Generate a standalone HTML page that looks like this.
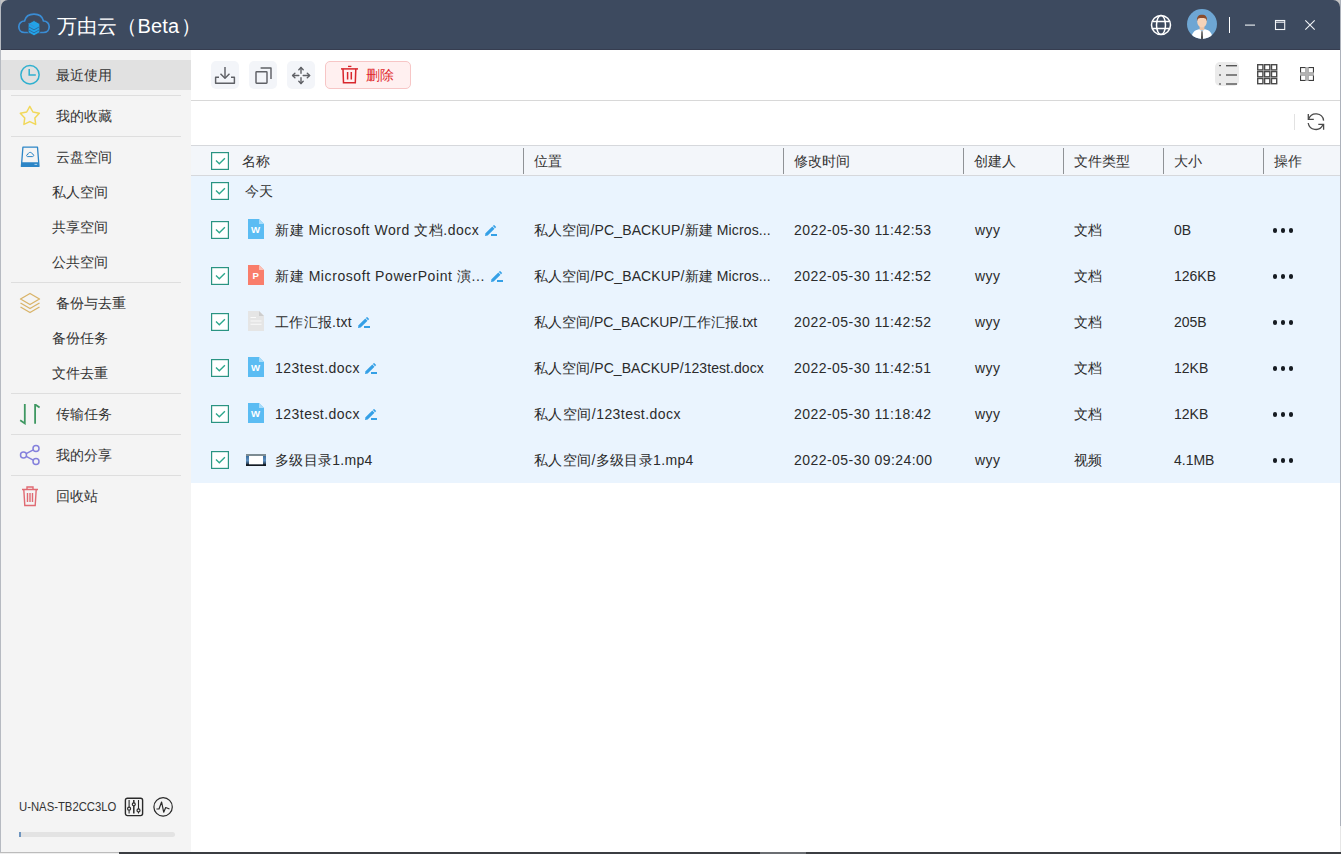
<!DOCTYPE html>
<html><head><meta charset="utf-8">
<style>
*{margin:0;padding:0;box-sizing:border-box}
html,body{width:1341px;height:854px;overflow:hidden;background:#c4c4c4;font-family:"Liberation Sans",sans-serif;color:#333}
.abs{position:absolute}
#win{position:absolute;left:0;top:0;width:1341px;height:854px;overflow:hidden}
#content{position:absolute;left:1px;top:50px;width:1339px;height:802px;background:#fff}
#hdr{position:absolute;left:1px;top:0;width:1339px;height:50px;background:#3d4a5f;border-radius:7px 7px 0 0;border-bottom:1px solid #363d50}
#hdr>*{margin-left:-1px}
#side{position:absolute;left:0;top:50px;width:191px;height:802px;background:#f4f4f4}
.t{position:absolute;white-space:nowrap;line-height:20px}
.sep{position:absolute;left:11px;width:170px;height:1px;background:#dedede}
.mi{font-size:13.6px;color:#333;margin-top:1px}
.tb{position:absolute;top:61px;width:28px;height:28px;border-radius:5px;background:#f3f5f9}
.col{position:absolute;top:148px;width:1px;height:26px;background:#8f9296}
.hd{position:absolute;top:153px;font-size:13px;color:#333;line-height:16px}
.cb{position:absolute;left:210px;width:19px;height:19px;border:1.6px solid #2ba38f;background:#fff}
.cb:after{content:"";position:absolute;left:4.5px;top:3px;width:7px;height:4px;border-left:1.5px solid #2ba38f;border-bottom:1.5px solid #2ba38f;transform:rotate(-45deg)}
.row{position:absolute;left:0;width:1150px;height:46px}
.c{position:absolute;font-size:14px;line-height:20px;white-space:nowrap;color:#2b2b2b}
.d{letter-spacing:0.45px}
.dots{position:absolute;left:1273px;width:20px;height:4px}
.dots i{position:absolute;top:0.4px;width:4.3px;height:4.3px;border-radius:50%;background:#161b22}
</style></head><body>
<div id="win">
  <div id="content"></div>
  <div id="hdr">
    <svg class="abs" style="left:14px;top:10px" width="40" height="30" viewBox="0 0 40 30">
      <path d="M10.5 22.5C7 22.5 4.8 20 4.8 16.8C4.8 13.5 7.3 11 10.5 11C11.5 7 15 4.2 20 4.2C25 4.2 28.5 7 29.5 11C32.7 11 35.2 13.5 35.2 16.8C35.2 20 33 22.5 29.5 22.5Z" fill="none" stroke="#3a8cd4" stroke-width="1.7"/>
      <path d="M14.2 13.8L20 10.5L25.8 13.8V22.5L20 25.8L14.2 22.5Z" fill="#22a3e8" stroke="#3d4a5f" stroke-width="0.8"/>
      <path d="M14.2 16.6L20 19.8L25.8 16.6M14.2 19.6L20 22.8L25.8 19.6" fill="none" stroke="#2a6fa8" stroke-width="1"/>
      <path d="M14.6 13.6L20.5 16.8" fill="none" stroke="#3a8cd4" stroke-width="1"/>
    </svg>
    <div class="t" style="left:56.5px;top:15px;font-size:20px;line-height:22px;color:#fff">万由云（<span style="margin-left:1px;letter-spacing:0.2px">Beta</span><span style="margin-left:2px">）</span></div>
    <!-- globe -->
    <svg class="abs" style="left:1150px;top:14px" width="22" height="22" viewBox="0 0 22 22" fill="none" stroke="#fff" stroke-width="1.5">
      <circle cx="11" cy="11" r="9.5"/><ellipse cx="11" cy="11" rx="4.5" ry="9.5"/><path d="M2.5 7.5H19.5M2.5 14.5H19.5"/>
    </svg>
    <!-- avatar -->
    <svg class="abs" style="left:1187px;top:9px" width="30" height="30" viewBox="0 0 30 30">
      <defs><clipPath id="av"><circle cx="15" cy="15" r="15"/></clipPath></defs>
      <circle cx="15" cy="15" r="15" fill="#6ea6d3"/>
      <g clip-path="url(#av)">
        <rect x="12.6" y="15" width="4.8" height="6" fill="#efc3a4"/>
        <path d="M4.5 30C4.5 24 7.5 21 12 20.2L15 22L18 20.2C22.5 21 25.5 24 25.5 30Z" fill="#fff"/>
        <path d="M12.2 20.3L15 22.6L17.8 20.3" fill="none" stroke="#e8e8e8" stroke-width="0.6"/>
        <ellipse cx="15" cy="12.6" rx="4.8" ry="5.8" fill="#f7d3b8"/>
        <path d="M10 12.5C9.6 7.6 11.6 5.8 15 5.8C18.4 5.8 20.4 7.6 20 12.5C19.5 10 18.8 9.4 17.5 9.2C16 9 13.5 9.2 12.4 9.2C11 9.4 10.4 10.2 10 12.5Z" fill="#8a4b2b"/>
        <path d="M14.5 22.2H15.5L15.8 30H14.2Z" fill="#161616"/>
      </g>
    </svg>
    <div class="abs" style="left:1229px;top:17px;width:1px;height:16px;background:#fff"></div>
    <svg class="abs" style="left:1244px;top:19px" width="72" height="12" viewBox="0 0 72 12" fill="none" stroke="#f2f4f7" stroke-width="1.1"><path d="M1 6.1H11"/><rect x="31.5" y="1.5" width="9.2" height="9"/><path d="M31.5 3.2H40.7"/><path d="M61.3 1.3L70.7 10.7M70.7 1.3L61.3 10.7"/></svg>
  </div>

  <div id="side">
    <div class="abs" style="left:0;top:10px;width:191px;height:30px;background:#e1e1e1"></div>
  </div>
  <div class="sep" style="top:95px"></div>
  <div class="sep" style="top:136px"></div>
  <div class="sep" style="top:282px"></div>
  <div class="sep" style="top:393px"></div>
  <div class="sep" style="top:434px"></div>
  <div class="sep" style="top:475px"></div>
  <div class="t mi" style="left:56px;top:65px">最近使用</div>
  <div class="t mi" style="left:56px;top:106px">我的收藏</div>
  <div class="t mi" style="left:56px;top:147px">云盘空间</div>
  <div class="t mi" style="left:52px;top:182px">私人空间</div>
  <div class="t mi" style="left:52px;top:217px">共享空间</div>
  <div class="t mi" style="left:52px;top:252px">公共空间</div>
  <div class="t mi" style="left:56px;top:293px">备份与去重</div>
  <div class="t mi" style="left:52px;top:328px">备份任务</div>
  <div class="t mi" style="left:52px;top:363px">文件去重</div>
  <div class="t mi" style="left:56px;top:404px">传输任务</div>
  <div class="t mi" style="left:56px;top:445px">我的分享</div>
  <div class="t mi" style="left:56px;top:486px">回收站</div>
  <!-- icons -->
  <svg class="abs" style="left:19px;top:64px" width="22" height="22" viewBox="0 0 22 22" fill="none" stroke="#2fb0cf" stroke-width="1.5"><circle cx="11" cy="10.75" r="9.15"/><path d="M10.2 5V11.1H16.8"/></svg>
  <svg class="abs" style="left:19px;top:105px" width="22" height="22" viewBox="0 0 22 22" fill="none" stroke="#f1d85a" stroke-width="1.5" stroke-linejoin="round"><path d="M10.80 1.30 L13.92 7.01 L20.31 8.21 L15.84 12.94 L16.68 19.39 L10.80 16.60 L4.92 19.39 L5.76 12.94 L1.29 8.21 L7.68 7.01Z"/></svg>
  <svg class="abs" style="left:20px;top:146px" width="20" height="22" viewBox="0 0 20 22"><path d="M2.9 1.2H17.5L19 20.4H1.4Z" fill="none" stroke="#2c85c6" stroke-width="1.3" stroke-linejoin="round"/><path d="M1.7 16.2H18.7L19 20.6H1.4Z" fill="#2c85c6"/><path d="M14.5 18.4H17.2" stroke="#cfe6f6" stroke-width="0.8"/><path d="M7.5 10.6H12.3C13.3 10.6 13.7 10 13.7 9.3C13.7 8.6 13.1 8.1 12.4 8.1C12.1 7 11.3 6.4 10.2 6.4C9 6.4 8.1 7.2 8 8.3C7.3 8.3 6.6 8.8 6.6 9.5C6.6 10.1 7 10.6 7.5 10.6Z" fill="none" stroke="#2c85c6" stroke-width="1"/></svg>
  <svg class="abs" style="left:19px;top:292px" width="22" height="22" viewBox="0 0 22 22" fill="none" stroke="#d9b46a" stroke-width="1.4" stroke-linejoin="round"><path d="M11 1.5L20.5 7L11 12.5L1.5 7Z"/><path d="M1.5 11L11 16.5L20.5 11"/><path d="M1.5 15L11 20.5L20.5 15"/></svg>
  <svg class="abs" style="left:19px;top:404px" width="22" height="21" viewBox="0 0 22 21" fill="none" stroke="#3f9862" stroke-width="1.8"><path d="M5.8 0V19.4L1.2 16.3"/><path d="M16.1 19.8V0.4L20.6 3.5"/></svg>
  <svg class="abs" style="left:19px;top:444px" width="22" height="22" viewBox="0 0 22 22" fill="none" stroke="#8480dc" stroke-width="1.5"><circle cx="17" cy="4.5" r="3"/><circle cx="4.5" cy="11" r="3"/><circle cx="17" cy="17.5" r="3"/><path d="M7.2 9.6L14.3 5.9M7.2 12.4L14.3 16.1"/></svg>
  <svg class="abs" style="left:21px;top:485px" width="18" height="22" viewBox="0 0 18 22" fill="none" stroke="#e06a72" stroke-width="1.4"><path d="M1 4.5H17M6 4.5V2H12V4.5"/><path d="M2.8 4.5L3.8 20.5H14.2L15.2 4.5"/><path d="M6.5 8V17M9 8V17M11.5 8V17"/></svg>

  <!-- toolbar -->
  <div class="tb" style="left:211px"></div>
  <div class="tb" style="left:249px"></div>
  <div class="tb" style="left:287px"></div>
  <svg class="abs" style="left:211px;top:61px" width="28" height="28" viewBox="0 0 28 28" fill="none" stroke="#5f6166" stroke-width="1.45" stroke-linejoin="round"><path d="M14 6V17"/><path d="M9.5 12.8L14 17.2L18.5 12.8"/><path d="M8 16.3H4.6V22.2H23.4V16.3H20"/></svg>
  <svg class="abs" style="left:249px;top:61px" width="28" height="28" viewBox="0 0 28 28" fill="none" stroke="#5f6166" stroke-width="1.45" stroke-linejoin="round"><rect x="7" y="10.8" width="11" height="11.4" rx="0.6"/><path d="M11.6 6.9H22V17.9"/></svg>
  <svg class="abs" style="left:287px;top:61px" width="28" height="28" viewBox="0 0 28 28" fill="none" stroke="#5f6166" stroke-width="1.4" stroke-linejoin="round" stroke-linecap="round"><path d="M14 6.4V12.3M14 16.7V22.6M5.6 14.5H11.8M16.2 14.5H22.6"/><path d="M11.8 8.7L14 6.4L16.2 8.7M11.8 20.3L14 22.6L16.2 20.3M7.9 12.3L5.6 14.5L7.9 16.7M20.3 12.3L22.6 14.5L20.3 16.7"/></svg>
  <div class="abs" style="left:325px;top:61px;width:86px;height:28px;border:1px solid #f7c6c6;background:#fff0f0;border-radius:5px"></div>
  <svg class="abs" style="left:340px;top:65px" width="19" height="20" viewBox="0 0 19 20" fill="none" stroke="#d8262c" stroke-width="1.5"><path d="M1 3.9H18"/><path d="M8 1.4H11.4" stroke-width="1.3"/><path d="M3 3.9L3.5 17.8H15.3L15.8 3.9"/><path d="M7.6 7V14.6M11.3 7V14.6"/></svg>
  <div class="t" style="left:366px;top:65px;font-size:14px;color:#e02a2e">删除</div>
  <!-- view icons -->
  <div class="abs" style="left:1215px;top:62px;width:24px;height:24px;border-radius:5px;background:#ebebeb"></div>
  <svg class="abs" style="left:1215px;top:62px" width="24" height="24" viewBox="0 0 24 24" fill="#555"><rect x="4" y="3" width="2" height="1.2"/><rect x="4" y="12.4" width="2" height="1.2"/><rect x="4" y="21.4" width="2" height="1.2"/><rect x="11" y="3" width="11" height="1.4"/><rect x="11" y="12.3" width="11" height="1.4"/><rect x="11" y="21.3" width="11" height="1.4"/></svg>
  <svg class="abs" style="left:1257px;top:64px" width="21" height="21" viewBox="0 0 21 21" fill="none" stroke="#4a4a4a" stroke-width="1.4"><rect x="0.7" y="0.7" width="5.2" height="5.2"/><rect x="7.6" y="0.7" width="5.2" height="5.2"/><rect x="14.5" y="0.7" width="5.2" height="5.2"/><rect x="0.7" y="7.6" width="5.2" height="5.2"/><rect x="7.6" y="7.6" width="5.2" height="5.2"/><rect x="14.5" y="7.6" width="5.2" height="5.2"/><rect x="0.7" y="14.5" width="5.2" height="5.2"/><rect x="7.6" y="14.5" width="5.2" height="5.2"/><rect x="14.5" y="14.5" width="5.2" height="5.2"/></svg>
  <svg class="abs" style="left:1300px;top:67px" width="14" height="14" viewBox="0 0 14 14"><g fill="none" stroke="#3c3c3c" stroke-width="1.1"><rect x="0.55" y="0.55" width="5.6" height="5.6"/><rect x="7.85" y="0.55" width="5.6" height="5.6"/><rect x="0.55" y="7.85" width="5.6" height="5.6"/><rect x="7.85" y="7.85" width="5.6" height="5.6"/></g><rect x="5.4" y="0" width="3.2" height="14" fill="#b3b3b3"/><rect x="0" y="5.4" width="14" height="3.2" fill="#b3b3b3"/></svg>
  <div class="abs" style="left:191px;top:100px;width:1149px;height:1px;background:#d8d8d8"></div>
  <div class="abs" style="left:1294px;top:114px;width:1px;height:16px;background:#e2e2e2"></div>
  <svg class="abs" style="left:1307px;top:113px" width="18" height="18" viewBox="0 0 18 18" fill="none" stroke="#4a4a4a" stroke-width="1.3"><path d="M1.3 0.9V6.4H6.8"/><path d="M1.7 6.1A7.7 7.7 0 0 1 16.6 7.6"/><path d="M1.2 10A7.7 7.7 0 0 0 15.8 12"/><path d="M11.3 11.3H16.6V16.7"/></svg>
  <!-- table header -->
  <div class="abs" style="left:191px;top:145px;width:1149px;height:31px;background:#f3f6fa;border-top:1px solid #d6d8dc;border-bottom:1px solid #d6d8dc"></div>
  <div class="col" style="left:523px"></div>
  <div class="col" style="left:783px"></div>
  <div class="col" style="left:963px"></div>
  <div class="col" style="left:1063px"></div>
  <div class="col" style="left:1163px"></div>
  <div class="col" style="left:1263px"></div>
  <svg class="abs" style="left:211px;top:152px" width="18" height="18" viewBox="0 0 18 18"><rect x="0.6" y="0.6" width="16.8" height="16.8" fill="#fff" stroke="#2a9482" stroke-width="1.2"/><path d="M5 8.6L8.3 11.7L13.9 6.3" fill="none" stroke="#2da88d" stroke-width="1.4"/></svg>
  <div class="t mi" style="left:242px;top:151px">名称</div>
  <div class="t mi" style="left:534px;top:151px">位置</div>
  <div class="t mi" style="left:794px;top:151px">修改时间</div>
  <div class="t mi" style="left:974px;top:151px">创建人</div>
  <div class="t mi" style="left:1074px;top:151px">文件类型</div>
  <div class="t mi" style="left:1174px;top:151px">大小</div>
  <div class="t mi" style="left:1274px;top:151px">操作</div>
  <!-- body -->
  <div class="abs" style="left:191px;top:176px;width:1149px;height:307px;background:#eaf4fe"></div>
  <svg class="abs" style="left:211px;top:182px" width="18" height="18" viewBox="0 0 18 18"><rect x="0.6" y="0.6" width="16.8" height="16.8" fill="#fff" stroke="#2a9482" stroke-width="1.2"/><path d="M5 8.6L8.3 11.7L13.9 6.3" fill="none" stroke="#2da88d" stroke-width="1.4"/></svg>
  <div class="t mi" style="left:245px;top:181px">今天</div>
  <svg class="abs" style="left:211px;top:221px" width="18" height="18" viewBox="0 0 18 18"><rect x="0.6" y="0.6" width="16.8" height="16.8" fill="#fff" stroke="#2a9482" stroke-width="1.2"/><path d="M5 8.6L8.3 11.7L13.9 6.3" fill="none" stroke="#2da88d" stroke-width="1.4"/></svg>
  <svg class="abs" style="left:248px;top:219px" width="16" height="20" viewBox="0 0 16 20"><path d="M0 0H11L16 5V20H0Z" fill="#5bbcf3"/><path d="M11 0V5H16Z" fill="#a8dcfa"/><text x="7.6" y="14.2" font-family="Liberation Sans" font-size="9.6" font-weight="bold" fill="#fff" text-anchor="middle">W</text></svg>
  <div class="t c" style="left:275px;top:220px;letter-spacing:0.53px">新建 Microsoft Word 文档.docx</div>
  <svg class="abs" style="left:485px;top:225px" width="13" height="12" viewBox="0 0 13 12"><path d="M0 11L0.5 8.3L7.3 1.6L9.5 3.8L2.7 10.5Z" fill="#35a0e6"/><path d="M7.9 1L9 -0.1L11.2 2.1L10.1 3.2Z" fill="#35a0e6"/><rect x="6" y="9" width="6" height="2" fill="#35a0e6"/></svg>
  <div class="t c" style="left:534px;top:220px;letter-spacing:0.13px">私人空间/PC_BACKUP/新建 Micros...</div>
  <div class="t c d" style="left:794px;top:220px">2022-05-30 11:42:53</div>
  <div class="t c" style="left:975px;top:220px;letter-spacing:0.5px">wyy</div>
  <div class="t c" style="left:1074px;top:220px">文档</div>
  <div class="t c" style="left:1174px;top:220px">0B</div>
  <div class="dots" style="top:228px"><i style="left:0"></i><i style="left:8px"></i><i style="left:16px"></i></div>
  <svg class="abs" style="left:211px;top:267px" width="18" height="18" viewBox="0 0 18 18"><rect x="0.6" y="0.6" width="16.8" height="16.8" fill="#fff" stroke="#2a9482" stroke-width="1.2"/><path d="M5 8.6L8.3 11.7L13.9 6.3" fill="none" stroke="#2da88d" stroke-width="1.4"/></svg>
  <svg class="abs" style="left:248px;top:265px" width="16" height="20" viewBox="0 0 16 20"><path d="M0 0H11L16 5V20H0Z" fill="#f97d6b"/><path d="M11 0V5H16Z" fill="#fcc0b5"/><text x="7.6" y="14.2" font-family="Liberation Sans" font-size="9.6" font-weight="bold" fill="#fff" text-anchor="middle">P</text></svg>
  <div class="t c" style="left:275px;top:266px;letter-spacing:0.58px">新建 Microsoft PowerPoint 演...</div>
  <svg class="abs" style="left:491px;top:271px" width="13" height="12" viewBox="0 0 13 12"><path d="M0 11L0.5 8.3L7.3 1.6L9.5 3.8L2.7 10.5Z" fill="#35a0e6"/><path d="M7.9 1L9 -0.1L11.2 2.1L10.1 3.2Z" fill="#35a0e6"/><rect x="6" y="9" width="6" height="2" fill="#35a0e6"/></svg>
  <div class="t c" style="left:534px;top:266px;letter-spacing:0.13px">私人空间/PC_BACKUP/新建 Micros...</div>
  <div class="t c d" style="left:794px;top:266px">2022-05-30 11:42:52</div>
  <div class="t c" style="left:975px;top:266px;letter-spacing:0.5px">wyy</div>
  <div class="t c" style="left:1074px;top:266px">文档</div>
  <div class="t c" style="left:1174px;top:266px">126KB</div>
  <div class="dots" style="top:274px"><i style="left:0"></i><i style="left:8px"></i><i style="left:16px"></i></div>
  <svg class="abs" style="left:211px;top:313px" width="18" height="18" viewBox="0 0 18 18"><rect x="0.6" y="0.6" width="16.8" height="16.8" fill="#fff" stroke="#2a9482" stroke-width="1.2"/><path d="M5 8.6L8.3 11.7L13.9 6.3" fill="none" stroke="#2da88d" stroke-width="1.4"/></svg>
  <svg class="abs" style="left:248px;top:311px" width="16" height="20" viewBox="0 0 16 20"><path d="M0 0H11L16 5V20H0Z" fill="#e5e5e5"/><path d="M11 0L16 5H11Z" fill="#cdcdcd"/><path d="M2.5 6.5H8M2.5 10H13.5M2.5 13.3H13.5" stroke="#fafafa" stroke-width="1.1"/></svg>
  <div class="t c" style="left:275px;top:312px;letter-spacing:0.27px">工作汇报.txt</div>
  <svg class="abs" style="left:358px;top:317px" width="13" height="12" viewBox="0 0 13 12"><path d="M0 11L0.5 8.3L7.3 1.6L9.5 3.8L2.7 10.5Z" fill="#35a0e6"/><path d="M7.9 1L9 -0.1L11.2 2.1L10.1 3.2Z" fill="#35a0e6"/><rect x="6" y="9" width="6" height="2" fill="#35a0e6"/></svg>
  <div class="t c" style="left:534px;top:312px">私人空间/PC_BACKUP/工作汇报.txt</div>
  <div class="t c d" style="left:794px;top:312px">2022-05-30 11:42:52</div>
  <div class="t c" style="left:975px;top:312px;letter-spacing:0.5px">wyy</div>
  <div class="t c" style="left:1074px;top:312px">文档</div>
  <div class="t c" style="left:1174px;top:312px">205B</div>
  <div class="dots" style="top:320px"><i style="left:0"></i><i style="left:8px"></i><i style="left:16px"></i></div>
  <svg class="abs" style="left:211px;top:359px" width="18" height="18" viewBox="0 0 18 18"><rect x="0.6" y="0.6" width="16.8" height="16.8" fill="#fff" stroke="#2a9482" stroke-width="1.2"/><path d="M5 8.6L8.3 11.7L13.9 6.3" fill="none" stroke="#2da88d" stroke-width="1.4"/></svg>
  <svg class="abs" style="left:248px;top:357px" width="16" height="20" viewBox="0 0 16 20"><path d="M0 0H11L16 5V20H0Z" fill="#5bbcf3"/><path d="M11 0V5H16Z" fill="#a8dcfa"/><text x="7.6" y="14.2" font-family="Liberation Sans" font-size="9.6" font-weight="bold" fill="#fff" text-anchor="middle">W</text></svg>
  <div class="t c" style="left:275px;top:358px;letter-spacing:0.47px">123test.docx</div>
  <svg class="abs" style="left:365px;top:363px" width="13" height="12" viewBox="0 0 13 12"><path d="M0 11L0.5 8.3L7.3 1.6L9.5 3.8L2.7 10.5Z" fill="#35a0e6"/><path d="M7.9 1L9 -0.1L11.2 2.1L10.1 3.2Z" fill="#35a0e6"/><rect x="6" y="9" width="6" height="2" fill="#35a0e6"/></svg>
  <div class="t c" style="left:534px;top:358px;letter-spacing:0.07px">私人空间/PC_BACKUP/123test.docx</div>
  <div class="t c d" style="left:794px;top:358px">2022-05-30 11:42:51</div>
  <div class="t c" style="left:975px;top:358px;letter-spacing:0.5px">wyy</div>
  <div class="t c" style="left:1074px;top:358px">文档</div>
  <div class="t c" style="left:1174px;top:358px">12KB</div>
  <div class="dots" style="top:366px"><i style="left:0"></i><i style="left:8px"></i><i style="left:16px"></i></div>
  <svg class="abs" style="left:211px;top:405px" width="18" height="18" viewBox="0 0 18 18"><rect x="0.6" y="0.6" width="16.8" height="16.8" fill="#fff" stroke="#2a9482" stroke-width="1.2"/><path d="M5 8.6L8.3 11.7L13.9 6.3" fill="none" stroke="#2da88d" stroke-width="1.4"/></svg>
  <svg class="abs" style="left:248px;top:403px" width="16" height="20" viewBox="0 0 16 20"><path d="M0 0H11L16 5V20H0Z" fill="#5bbcf3"/><path d="M11 0V5H16Z" fill="#a8dcfa"/><text x="7.6" y="14.2" font-family="Liberation Sans" font-size="9.6" font-weight="bold" fill="#fff" text-anchor="middle">W</text></svg>
  <div class="t c" style="left:275px;top:404px;letter-spacing:0.47px">123test.docx</div>
  <svg class="abs" style="left:365px;top:409px" width="13" height="12" viewBox="0 0 13 12"><path d="M0 11L0.5 8.3L7.3 1.6L9.5 3.8L2.7 10.5Z" fill="#35a0e6"/><path d="M7.9 1L9 -0.1L11.2 2.1L10.1 3.2Z" fill="#35a0e6"/><rect x="6" y="9" width="6" height="2" fill="#35a0e6"/></svg>
  <div class="t c" style="left:534px;top:404px;letter-spacing:0.45px">私人空间/123test.docx</div>
  <div class="t c d" style="left:794px;top:404px">2022-05-30 11:18:42</div>
  <div class="t c" style="left:975px;top:404px;letter-spacing:0.5px">wyy</div>
  <div class="t c" style="left:1074px;top:404px">文档</div>
  <div class="t c" style="left:1174px;top:404px">12KB</div>
  <div class="dots" style="top:412px"><i style="left:0"></i><i style="left:8px"></i><i style="left:16px"></i></div>
  <svg class="abs" style="left:211px;top:451px" width="18" height="18" viewBox="0 0 18 18"><rect x="0.6" y="0.6" width="16.8" height="16.8" fill="#fff" stroke="#2a9482" stroke-width="1.2"/><path d="M5 8.6L8.3 11.7L13.9 6.3" fill="none" stroke="#2da88d" stroke-width="1.4"/></svg>
  <svg class="abs" style="left:246px;top:454px" width="20" height="12" viewBox="0 0 20 12"><defs><linearGradient id="vg" x1="0" y1="0" x2="0" y2="1"><stop offset="0" stop-color="#2c5f90"/><stop offset="0.55" stop-color="#5d8fbf"/><stop offset="1" stop-color="#0e141c"/></linearGradient></defs><rect x="0" y="0" width="20" height="12" fill="url(#vg)"/><rect x="0" y="0" width="20" height="2" fill="#7d8c93"/><rect x="0" y="10.3" width="20" height="1.7" fill="#141a22"/><rect x="3" y="2" width="14" height="8.3" fill="#fff"/></svg>
  <div class="t c" style="left:275px;top:450px;letter-spacing:0.3px">多级目录1.mp4</div>
  <div class="t c" style="left:534px;top:450px;letter-spacing:0.35px">私人空间/多级目录1.mp4</div>
  <div class="t c d" style="left:794px;top:450px">2022-05-30 09:24:00</div>
  <div class="t c" style="left:975px;top:450px;letter-spacing:0.5px">wyy</div>
  <div class="t c" style="left:1074px;top:450px">视频</div>
  <div class="t c" style="left:1174px;top:450px">4.1MB</div>
  <div class="dots" style="top:458px"><i style="left:0"></i><i style="left:8px"></i><i style="left:16px"></i></div>
  <!-- bottom -->
  <div class="t" style="left:19px;top:797px;font-size:13px;color:#333;transform:scaleX(0.87);transform-origin:0 0">U-NAS-TB2CC3LO</div>
  <svg class="abs" style="left:124px;top:797px" width="20" height="20" viewBox="0 0 20 20" fill="none" stroke="#2a2a2a" stroke-width="1.4"><rect x="1.4" y="1.2" width="17.2" height="17.4" rx="2"/><path d="M5.1 3V16.5M14.5 3V16.5" stroke-width="1.1"/><path d="M9.8 3V16.5" stroke-width="1.5"/><circle cx="5.1" cy="11.7" r="1.5" fill="#f4f4f4" stroke-width="1.2"/><circle cx="9.8" cy="7.3" r="1.5" fill="#f4f4f4" stroke-width="1.2"/><circle cx="14.5" cy="13.4" r="1.5" fill="#f4f4f4" stroke-width="1.2"/></svg>
  <svg class="abs" style="left:153px;top:797px" width="20" height="20" viewBox="0 0 20 20" fill="none" stroke="#2a2a2a" stroke-width="1.2" stroke-linejoin="round"><circle cx="10.1" cy="9.9" r="9.2"/><path d="M3.4 12H6L8.6 5L10.7 15.2L12.7 10.5L16.5 12"/></svg>
  <div class="abs" style="left:19px;top:832px;width:156px;height:5px;border-radius:3px;background:#e3e3e3"></div>
  <div class="abs" style="left:19px;top:832px;width:1.5px;height:5px;background:#6f95bf"></div>
  <div class="abs" style="left:0;top:0;width:1px;height:854px;background:#b6bac1"></div>
  <div class="abs" style="left:1340px;top:0;width:1px;height:854px;background:#adb2bb"></div>
  <div class="abs" style="left:1340px;top:826px;width:1px;height:26px;background:#e6e6e6"></div>
  <div class="abs" style="left:0;top:852px;width:1341px;height:1px;background:#bcbcbc"></div>
  <div class="abs" style="left:0;top:853px;width:1341px;height:1px;background:#eeeeee"></div>
  <div class="abs" style="left:119px;top:852px;width:1222px;height:2px;background:#3b3e42"></div>
  <div class="abs" style="left:760px;top:852px;width:46px;height:2px;background:#6b6e72"></div>
</div>
</body></html>
